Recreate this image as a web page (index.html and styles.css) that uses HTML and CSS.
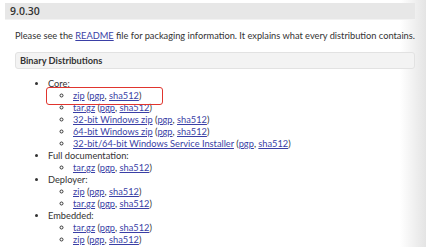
FILE: index.html
```
<!DOCTYPE html>
<html lang="en">
<head>
    <meta charset="UTF-8">
    <title>Apache Tomcat 9 Downloads</title>
    <link rel="stylesheet" href="styles.css">
</head>
<body>
<div class="page">
    <h3 class="version">9.0.30</h3>
    <div class="section">
        <p class="intro">Please see the <a href="#">README</a> file for packaging information. It explains what every distribution contains.</p>
        <h4 class="sub">Binary Distributions</h4>
        <ul class="dist">
            <li>Core:
                <ul>
                    <li class="mark"><a href="#">zip</a> (<a href="#">pgp</a>, <a href="#">sha512</a>)</li>
                    <li><a href="#">tar.gz</a> (<a href="#">pgp</a>, <a href="#">sha512</a>)</li>
                    <li><a href="#">32-bit Windows zip</a> (<a href="#">pgp</a>, <a href="#">sha512</a>)</li>
                    <li><a href="#">64-bit Windows zip</a> (<a href="#">pgp</a>, <a href="#">sha512</a>)</li>
                    <li><a href="#">32-bit/64-bit Windows Service Installer</a> (<a href="#">pgp</a>, <a href="#">sha512</a>)</li>
                </ul>
            </li>
            <li>Full documentation:
                <ul>
                    <li><a href="#">tar.gz</a> (<a href="#">pgp</a>, <a href="#">sha512</a>)</li>
                </ul>
            </li>
            <li>Deployer:
                <ul>
                    <li><a href="#">zip</a> (<a href="#">pgp</a>, <a href="#">sha512</a>)</li>
                    <li><a href="#">tar.gz</a> (<a href="#">pgp</a>, <a href="#">sha512</a>)</li>
                </ul>
            </li>
            <li>Embedded:
                <ul>
                    <li><a href="#">tar.gz</a> (<a href="#">pgp</a>, <a href="#">sha512</a>)</li>
                    <li><a href="#">zip</a> (<a href="#">pgp</a>, <a href="#">sha512</a>)</li>
                </ul>
            </li>
        </ul>
    </div>
</div>
</body>
</html>
```

FILE: styles.css
```
*{
    margin: 0;
    padding: 0;
}
html{
    background: linear-gradient(to right, #fff 400px, #e4e4e4 426px);
}
body{
    font-family: Lato, "Open Sans", sans-serif;
    font-size: 9.25px;
    color: #333;
    overflow: hidden;
}
a{
    color: #3a3fa6;
    text-decoration: underline;
}
.page{
    width: 410px;
    padding: 3px 0 0 5px;
}
.version{
    background: #e7e7e7;
    border-bottom: 1px solid #f2f2f2;
    font-family: "Open Sans", sans-serif;
    font-size: 10.5px;
    font-weight: 600;
    line-height: 16px;
    padding-left: 5px;
}
.section{
    padding-left: 10px;
}
.intro{
    margin-top: 9px;
    line-height: 14px;
    white-space: nowrap;
}
.sub{
    margin-top: 9px;
    background: #f3f3f3;
    border: 1px solid #e2e2e2;
    border-radius: 3px;
    font-weight: 700;
    line-height: 15px;
    padding-left: 4px;
}
.dist{
    margin-top: 9px;
    padding-left: 33px;
    list-style: disc;
    line-height: 12px;
}
.dist ul{
    padding-left: 25px;
    list-style: circle;
}
.mark{
    position: relative;
}
.mark::after{
    content: "";
    position: absolute;
    left: -27px;
    top: -3px;
    width: 117px;
    height: 18px;
    box-sizing: border-box;
    border: 1.5px solid #e0352e;
    border-radius: 3px;
}
```
